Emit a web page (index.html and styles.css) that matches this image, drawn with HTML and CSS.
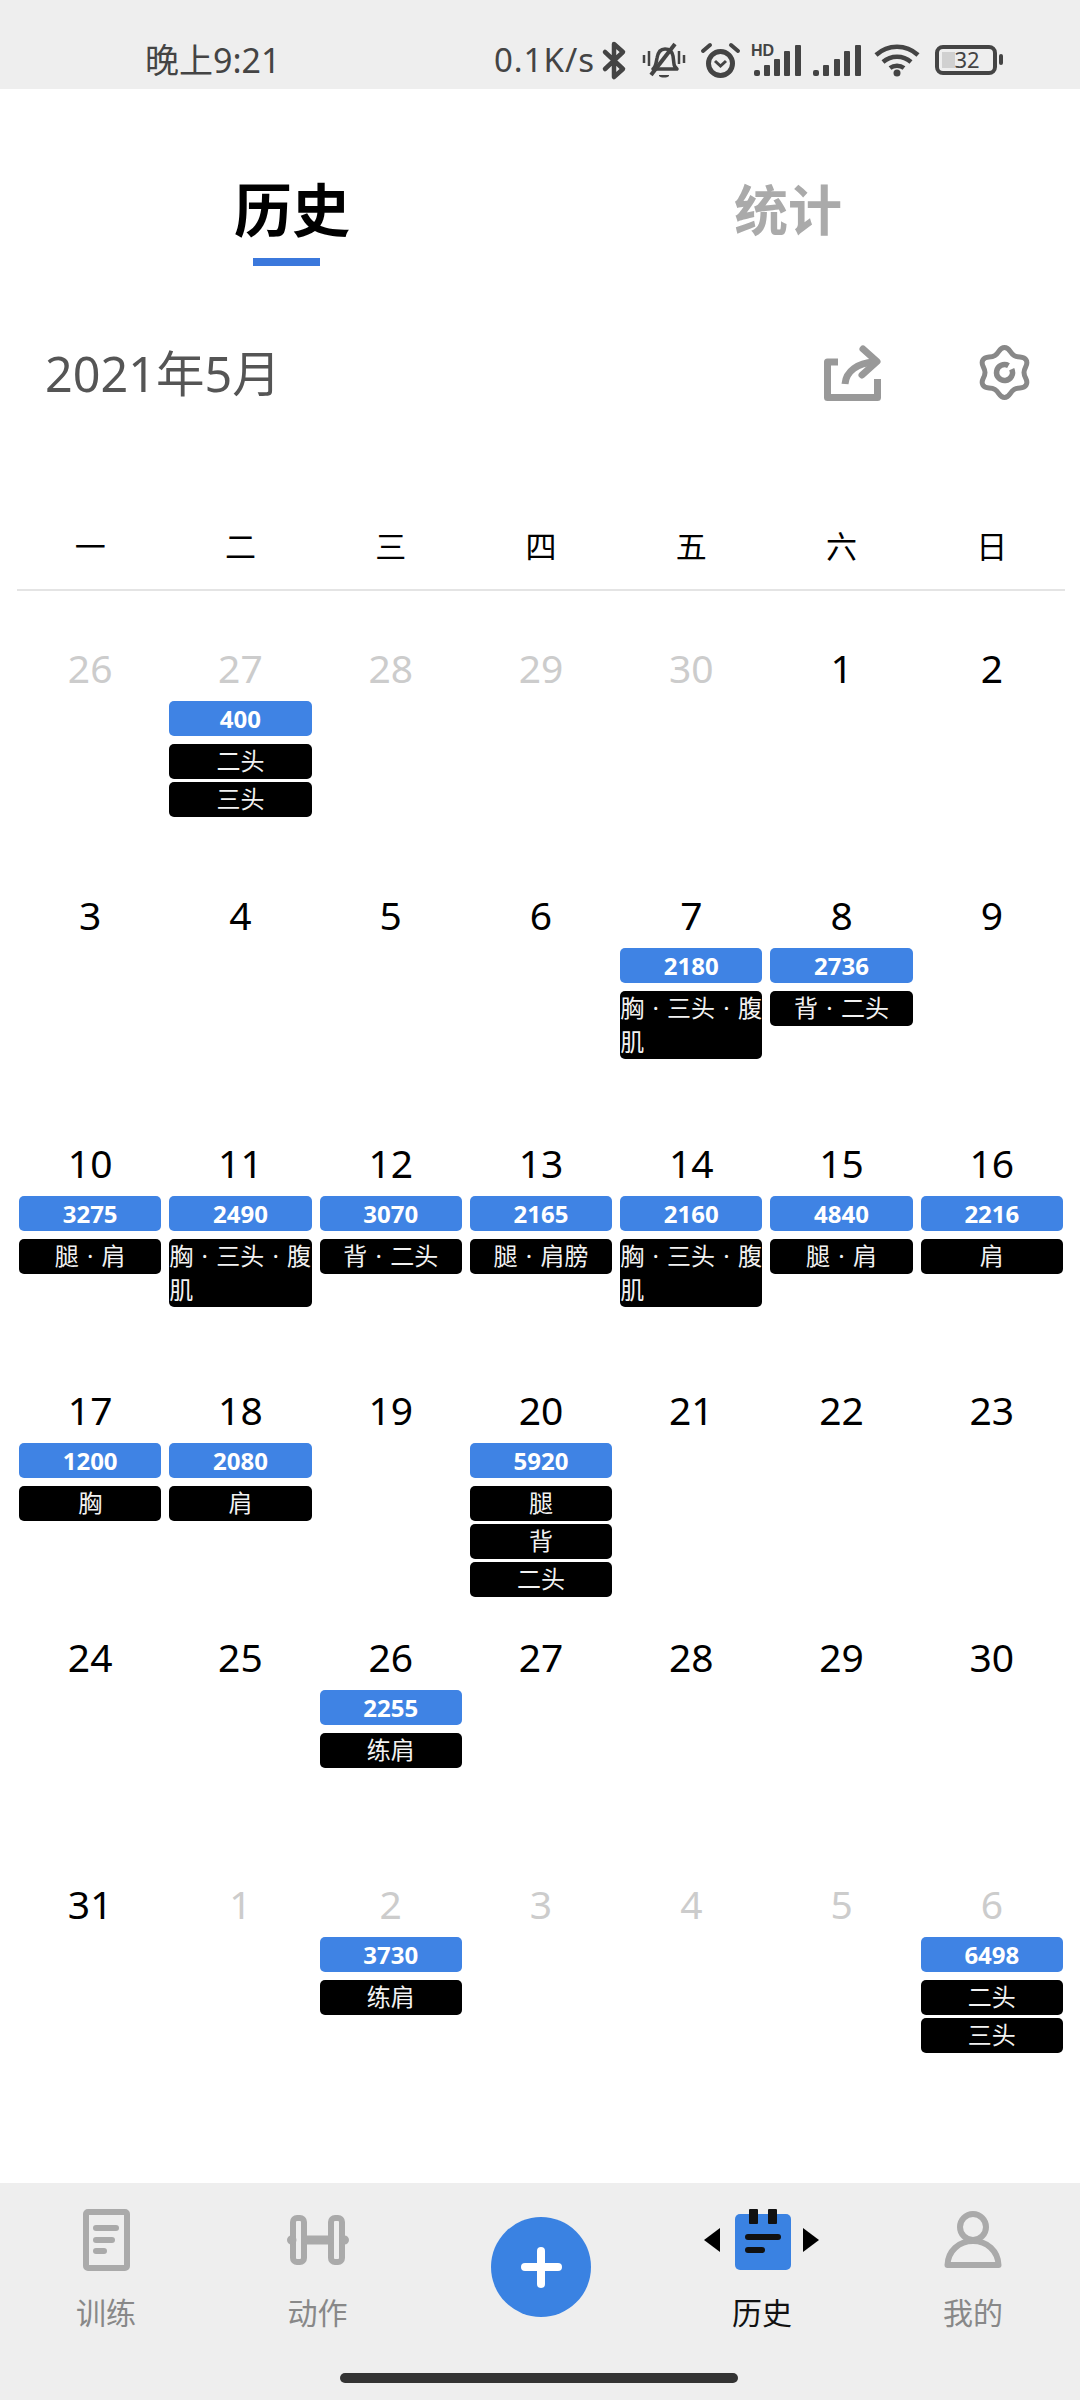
FILE: index.html
```html
<!DOCTYPE html>
<html lang="zh-CN">
<head>
  <meta charset="UTF-8">
  <title>历史</title>
  <link rel="stylesheet" href="styles.css">
</head>
<body>
  <!-- Status bar -->
  <div class="status">
    <span class="clock">晚上9:21</span>
    <div class="status-right">
      <span class="speed">0.1K/s</span>
      <svg class="ic-bt" width="25" height="37" viewBox="0 0 25 37"><path d="M3 10 21 27 12 35V2L21 10 3 27" fill="none" stroke="#444" stroke-width="4.500" stroke-linejoin="round" stroke-linecap="round"/></svg>
      <svg class="ic-bell" width="44" height="37" viewBox="0 0 44 37"><path d="M11 27c3-2 3-6 4-11 1-6 4-9 8-9s7 2 8 7l1 8c0 2 2 4 3 5z" fill="none" stroke="#444" stroke-width="3.500" stroke-linejoin="round"/><path d="M9 33 33 2" stroke="#444" stroke-width="4"/><path d="M17 33h10v1c-2 2-8 2-10 0z" fill="#444"/><path d="M2 13v8M7 9v15M37 9v13M42 13v8" stroke="#444" stroke-width="2.500"/></svg>
      <svg class="ic-alarm" width="39" height="36" viewBox="0 0 39 36"><circle cx="19.500" cy="21.500" r="12" fill="none" stroke="#444" stroke-width="5"/><path d="M14 19l5.500 5 5.500-5" fill="none" stroke="#444" stroke-width="3"/><path d="M2 9 9 3M30 3l7 6" stroke="#444" stroke-width="4" stroke-linecap="round"/></svg>
      <svg class="ic-hd" width="50" height="31" viewBox="0 0 50 31"><text class="hd-text" x="0" y="11">HD</text><rect x="3" y="25" width="6" height="6" rx="2" fill="#444"/><rect x="13" y="20" width="6" height="11" rx="1" fill="#444"/><rect x="23" y="14" width="6" height="17" rx="1" fill="#444"/><rect x="33" y="6" width="6" height="25" rx="1" fill="#444"/><rect x="44" y="0" width="6" height="31" rx="1" fill="#444"/></svg>
      <svg class="ic-sig" width="48" height="31" viewBox="0 0 48 31"><rect x="0" y="25" width="6" height="6" rx="2" fill="#444"/><rect x="10" y="20" width="6" height="11" rx="1" fill="#444"/><rect x="21" y="14" width="6" height="17" rx="1" fill="#444"/><rect x="31" y="6" width="6" height="25" rx="1" fill="#444"/><rect x="42" y="0" width="6" height="31" rx="1" fill="#444"/></svg>
      <svg class="ic-wifi" width="46" height="34" viewBox="0 0 46 34"><path d="M2 12c12-11 30-11 42 0M9 19c8-7 20-7 28 0M16 25c4-3 10-3 14 0" fill="none" stroke="#444" stroke-width="4.500"/><circle cx="23" cy="30" r="3.500" fill="#444"/></svg>
      <svg class="ic-batt" width="68" height="30" viewBox="0 0 68 30"><rect x="2" y="2" width="58" height="26" rx="6" fill="none" stroke="#444" stroke-width="4"/><rect x="7" y="7" width="13" height="16" fill="#d0d0d0"/><text class="batt-text" x="32" y="23" text-anchor="middle">32</text><rect x="64" y="9" width="4" height="11" rx="2" fill="#444"/></svg>
    </div>
  </div>

  <main class="main">
    <div class="tabs">
      <div class="tab tab-active">历史<span class="tab-line"></span></div>
      <div class="tab">统计</div>
    </div>

    <div class="month-row">
      <span class="month">2021年5月</span>
      <div class="month-tools">
        <svg width="57" height="55" viewBox="0 0 57 55"><path d="M14 16H3.500V51.500H53.500V33" fill="none" stroke="#999" stroke-width="7" stroke-linejoin="round"/><path d="M21 38C22 25 34 17 50 16" fill="none" stroke="#999" stroke-width="7"/><path d="M39 3 53 15.500 38 29" fill="none" stroke="#999" stroke-width="7" stroke-linejoin="round" stroke-linecap="round"/></svg>
        <svg width="53" height="54" viewBox="0 0 53 54"><path d="M26.500 1.500C32 1.500 31.500 6.850 36.250 9.600 41 12.350 45.400 9.240 48.150 14 50.900 18.760 46 21 46 26.500 46 32 50.900 34.240 48.150 39 45.400 43.760 41 40.650 36.250 43.400 31.500 46.150 32 51.500 26.500 51.500 21 51.500 21.500 46.150 16.750 43.400 12 40.650 7.600 43.760 4.850 39 2.100 34.240 7 32 7 26.500 7 21 2.100 18.760 4.850 14 7.600 9.240 12 12.350 16.750 9.600 21.500 6.850 21 1.500 26.500 1.500z" fill="none" stroke="#888" stroke-width="5"/><path d="M30.500 19.600A8 8 0 1 0 33.750 23.100" fill="none" stroke="#888" stroke-width="5.500"/></svg>
      </div>
    </div>

    <div class="calendar">
      <div class="week">
        <span>一</span><span>二</span><span>三</span><span>四</span><span>五</span><span>六</span><span>日</span>
      </div>
      <div class="week-line"></div>
      <div class="days">
        <div class="day muted"><span class="num">26</span></div>
        <div class="day muted"><span class="num">27</span><div class="score">400</div><div class="tag">二头</div><div class="tag">三头</div></div>
        <div class="day muted"><span class="num">28</span></div>
        <div class="day muted"><span class="num">29</span></div>
        <div class="day muted"><span class="num">30</span></div>
        <div class="day"><span class="num">1</span></div>
        <div class="day"><span class="num">2</span></div>

        <div class="day"><span class="num">3</span></div>
        <div class="day"><span class="num">4</span></div>
        <div class="day"><span class="num">5</span></div>
        <div class="day"><span class="num">6</span></div>
        <div class="day"><span class="num">7</span><div class="score">2180</div><div class="tag"><span>胸 · 三头 · 腹肌</span></div></div>
        <div class="day"><span class="num">8</span><div class="score">2736</div><div class="tag">背 · 二头</div></div>
        <div class="day"><span class="num">9</span></div>

        <div class="day"><span class="num">10</span><div class="score">3275</div><div class="tag">腿 · 肩</div></div>
        <div class="day"><span class="num">11</span><div class="score">2490</div><div class="tag"><span>胸 · 三头 · 腹肌</span></div></div>
        <div class="day"><span class="num">12</span><div class="score">3070</div><div class="tag">背 · 二头</div></div>
        <div class="day"><span class="num">13</span><div class="score">2165</div><div class="tag">腿 · 肩膀</div></div>
        <div class="day"><span class="num">14</span><div class="score">2160</div><div class="tag"><span>胸 · 三头 · 腹肌</span></div></div>
        <div class="day"><span class="num">15</span><div class="score">4840</div><div class="tag">腿 · 肩</div></div>
        <div class="day"><span class="num">16</span><div class="score">2216</div><div class="tag">肩</div></div>

        <div class="day"><span class="num">17</span><div class="score">1200</div><div class="tag">胸</div></div>
        <div class="day"><span class="num">18</span><div class="score">2080</div><div class="tag">肩</div></div>
        <div class="day"><span class="num">19</span></div>
        <div class="day"><span class="num">20</span><div class="score">5920</div><div class="tag">腿</div><div class="tag">背</div><div class="tag">二头</div></div>
        <div class="day"><span class="num">21</span></div>
        <div class="day"><span class="num">22</span></div>
        <div class="day"><span class="num">23</span></div>

        <div class="day"><span class="num">24</span></div>
        <div class="day"><span class="num">25</span></div>
        <div class="day"><span class="num">26</span><div class="score">2255</div><div class="tag">练肩</div></div>
        <div class="day"><span class="num">27</span></div>
        <div class="day"><span class="num">28</span></div>
        <div class="day"><span class="num">29</span></div>
        <div class="day"><span class="num">30</span></div>

        <div class="day"><span class="num">31</span></div>
        <div class="day muted"><span class="num">1</span></div>
        <div class="day muted"><span class="num">2</span><div class="score">3730</div><div class="tag">练肩</div></div>
        <div class="day muted"><span class="num">3</span></div>
        <div class="day muted"><span class="num">4</span></div>
        <div class="day muted"><span class="num">5</span></div>
        <div class="day muted"><span class="num">6</span><div class="score">6498</div><div class="tag">二头</div><div class="tag">三头</div></div>
      </div>
    </div>
  </main>

  <!-- Bottom navigation -->
  <nav class="nav">
    <div class="nav-items">
      <div class="nav-item">
        <div class="nav-icon">
          <svg width="47" height="62" viewBox="0 0 47 62"><rect x="3" y="3" width="41" height="56" rx="2" fill="none" stroke="#aaa" stroke-width="6"/><rect x="10" y="16" width="26" height="6" rx="3" fill="#aaa"/><rect x="10" y="28" width="22" height="6" rx="3" fill="#aaa"/><rect x="10" y="39" width="14" height="6" rx="3" fill="#aaa"/></svg>
        </div>
        <span class="nav-label">训练</span>
      </div>
      <div class="nav-item">
        <div class="nav-icon">
          <svg width="64" height="50" viewBox="0 0 64 50"><rect x="7" y="3" width="11" height="44" rx="4" fill="none" stroke="#aaa" stroke-width="6"/><rect x="45" y="3" width="11" height="44" rx="4" fill="none" stroke="#aaa" stroke-width="6"/><path d="M5.500 25H6M20 25H43M58 25H58.500" stroke="#aaa" stroke-width="9" stroke-linecap="round"/></svg>
        </div>
        <span class="nav-label">动作</span>
      </div>
      <div class="nav-item">
        <div class="add-btn"><span class="add-h"></span><span class="add-v"></span></div>
      </div>
      <div class="nav-item nav-active">
        <div class="nav-icon">
          <svg width="116" height="62" viewBox="0 0 116 62"><rect x="31" y="5" width="56" height="56" rx="5" fill="#3a82e2"/><rect x="45" y="0" width="9" height="15" rx="1" fill="#111"/><rect x="64" y="0" width="9" height="15" rx="1" fill="#111"/><rect x="41" y="25" width="36" height="6" rx="3" fill="#111"/><rect x="41" y="38" width="20" height="6" rx="3" fill="#111"/><path d="M0 31 16 19V43z" fill="#000"/><path d="M115 31 99 19V43z" fill="#000"/></svg>
        </div>
        <span class="nav-label">历史</span>
      </div>
      <div class="nav-item">
        <div class="nav-icon">
          <svg width="58" height="58" viewBox="0 0 58 58"><circle cx="29" cy="16" r="13" fill="none" stroke="#aaa" stroke-width="6"/><path d="M3.500 54C4 40 15 30 29 30 43 30 54 40 54.500 54Z" fill="none" stroke="#aaa" stroke-width="6" stroke-linejoin="round"/></svg>
        </div>
        <span class="nav-label">我的</span>
      </div>
    </div>
    <div class="home-bar"></div>
  </nav>
</body>
</html>
```
FILE: styles.css
```css
* {
  box-sizing: border-box;
}
body {
  margin: 0;
  width: 1080px;
  height: 2400px;
  display: flex;
  flex-direction: column;
  background-color: white;
  color: black;
  font-family: "Noto Sans", "Noto Sans CJK SC", sans-serif;
}
svg {
  display: block;
  flex: none;
  overflow: visible;
}

/* status bar */
.status {
  height: 89px;
  padding: 31px 77px 0 145px;
  display: flex;
  align-items: center;
  justify-content: space-between;
  background-color: #eeeeee;
  color: #444;
}
.clock {
  font-size: 34px;
  line-height: 44px;
}
.status-right {
  display: flex;
  align-items: center;
}
.speed {
  font-size: 33px;
  line-height: 44px;
  letter-spacing: 1px;
}
.ic-bt { margin-left: 7px; }
.ic-bell { margin-left: 15px; }
.ic-alarm { margin-left: 15px; }
.ic-hd { margin-left: 11px; }
.ic-sig { margin-left: 12px; }
.ic-wifi { margin-left: 13px; }
.ic-batt { margin-left: 15px; }
.hd-text {
  font: bold 16px "Liberation Sans", sans-serif;
  fill: #444;
}
.batt-text {
  font: 22px "Noto Sans", sans-serif;
  fill: #444;
}

/* tabs */
.main {
  flex: 1;
}
.tabs {
  display: flex;
  padding: 86px 0 0 44px;
}
.tab {
  width: 496px;
  height: 91px;
  display: flex;
  flex-direction: column;
  align-items: center;
  font-size: 54px;
  font-weight: 700;
  line-height: 70px;
  color: #aaaaaa;
}
.tab-active {
  font-size: 58px;
  color: black;
}
.tab-line {
  width: 67px;
  height: 8px;
  margin: 13px 11px 0 0;
  background-color: #3b78dc;
}

/* month header */
.month-row {
  margin-top: 77px;
  padding: 0 49px 0 45px;
  height: 60px;
  display: flex;
  align-items: center;
  justify-content: space-between;
}
.month {
  font-size: 48.5px;
  line-height: 60px;
  color: #555;
}
.month-tools {
  display: flex;
  align-items: center;
  gap: 97px;
}

/* calendar */
.calendar {
  padding: 0 13px 0 15px;
}
.week {
  margin-top: 123px;
  padding-bottom: 23px;
  display: grid;
  grid-template-columns: repeat(7, 1fr);
  font-size: 31px;
  line-height: 40px;
  text-align: center;
}
.week-line {
  height: 2px;
  margin: 0 2px;
  background-color: #e4e4e4;
}
.days {
  margin-top: 55px;
  display: grid;
  grid-template-columns: repeat(7, 1fr);
  grid-auto-rows: 247.3px;
}
.day {
  padding: 0 4px;
  text-align: center;
}
.num {
  display: block;
  height: 44px;
  margin-bottom: 11px;
  font-size: 39px;
  line-height: 44px;
}
.muted .num {
  color: #cccccc;
}
.score {
  height: 35px;
  margin-bottom: 8px;
  background-color: #3f83e4;
  border-radius: 5px;
  color: white;
  font-size: 24px;
  font-weight: 700;
  line-height: 35px;
}
.tag {
  min-height: 35px;
  margin-top: 3px;
  display: flex;
  justify-content: center;
  background-color: black;
  border-radius: 5px;
  color: #f2f2f2;
  font-size: 24px;
  line-height: 34px;
  word-spacing: 2px;
  text-align: left;
}

/* bottom nav */
.nav {
  height: 217px;
  padding-top: 26px;
  background-color: #eeeeee;
}
.nav-items {
  display: grid;
  grid-template-columns: 212px 211px 235px 208px 214px;
}
.nav-item {
  display: flex;
  flex-direction: column;
  align-items: center;
}
.nav-icon {
  height: 62px;
  display: flex;
  align-items: center;
}
.nav-label {
  margin-top: 22px;
  font-size: 30px;
  line-height: 40px;
  color: #888;
}
.nav-active .nav-label {
  color: #111;
}
.add-btn {
  position: relative;
  width: 100px;
  height: 100px;
  margin-top: 8px;
  border-radius: 50%;
  background-color: #3a82e2;
}
.add-h,
.add-v {
  position: absolute;
  background-color: white;
  border-radius: 4px;
}
.add-h {
  left: 30px;
  top: 46px;
  width: 41px;
  height: 8px;
}
.add-v {
  left: 46px;
  top: 30px;
  width: 8px;
  height: 41px;
}
.home-bar {
  width: 398px;
  height: 10px;
  margin: 40px 0 0 340px;
  border-radius: 5px;
  background-color: #333;
}
```
